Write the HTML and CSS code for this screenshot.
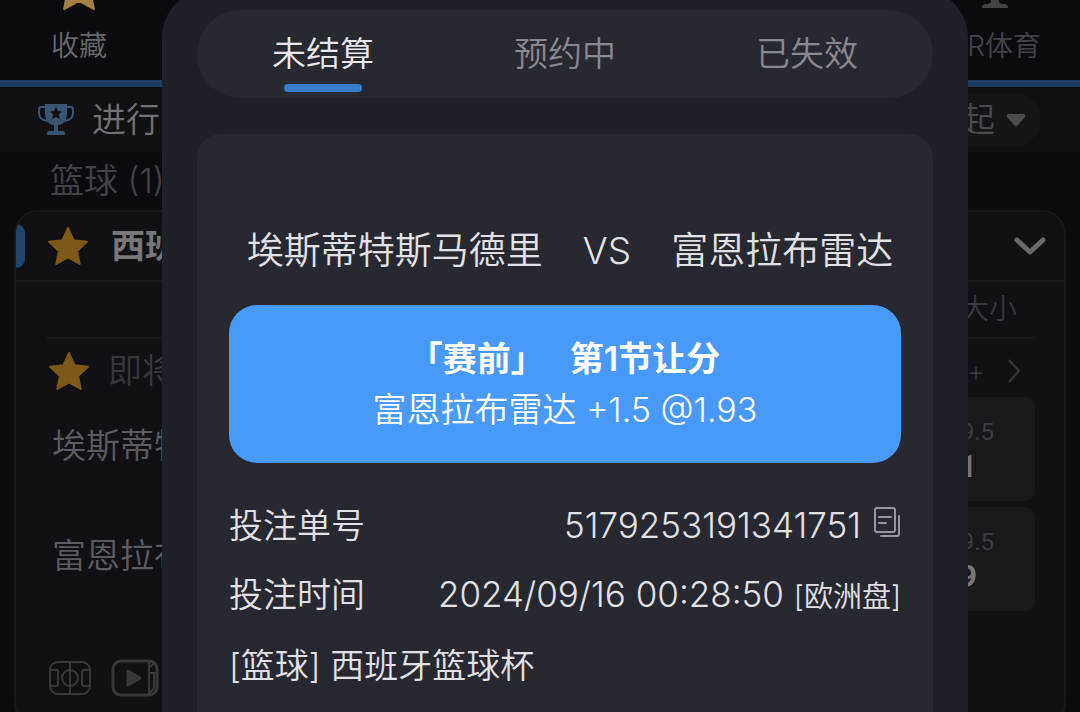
FILE: index.html
```html
<!DOCTYPE html>
<html lang="zh-CN">
<head>
    <meta charset="UTF-8">
    <meta name="viewport" content="width=device-width, initial-scale=1.0">
    <title>未结算</title>
    <link rel="stylesheet" href="styles.css">
</head>
<body>
    <svg class="sprite" aria-hidden="true">
        <symbol id="star" viewBox="0 0 42 40">
            <path d="M21 2l5.500 12.200 13.500 1.500-10 9.200 2.700 13.100L21 31.500 9.300 38 12 24.900 2 15.700l13.500-1.500z" fill="currentColor" stroke="currentColor" stroke-width="2" stroke-linejoin="round"/>
        </symbol>
    </svg>

    <!-- 背景页面 -->
    <main class="page">
        <nav class="top-nav">
            <a href="#" class="nav-item active">
                <svg class="nav-icon gold" viewBox="7 31 28 8"><use href="#star" width="42" height="40"/></svg>
                <span>收藏</span>
            </a>
            <a href="#" class="nav-item">
                <svg class="nav-icon" viewBox="0 0 36 10"><path d="M14 0h8v2q1 2 5 2 4 0 4 4H5q0-4 4-4 4 0 5-2z" fill="currentColor"/></svg>
                <span>VR体育</span>
            </a>
        </nav>

        <div class="filter-bar">
            <div class="filter-title">
                <svg class="trophy" viewBox="0 0 38 34">
                    <path d="M9 4H4q-2 0-2 3v3q0 7 9 8M29 4h5q2 0 2 3v3q0 7-9 8" fill="none" stroke="#385673" stroke-width="2"/>
                    <path d="M8 1h22v10q0 9-8 11h-1v6h5q2 0 2 4H10q0-4 2-4h5v-6h-1q-8-2-8-11z" fill="#385673"/>
                    <path d="M19 4l2 4 4 .5-3 3 .8 4.500-3.800-2-3.800 2 .8-4.500-3-3 4-.5z" fill="#111115"/>
                </svg>
                <span>进行</span>
            </div>
            <button class="league-btn">起
                <svg width="20" height="14" viewBox="0 0 20 14"><path d="M2 1h16q2 1 1 3l-7 8q-2 2-4 0L1 4Q0 2 2 1z" fill="currentColor"/></svg>
            </button>
        </div>

        <div class="sport-title">篮球 (1)</div>

        <section class="match-card">
            <header class="match-header">
                <svg class="star"><use href="#star"/></svg>
                <h2>西班</h2>
                <svg class="chevron" viewBox="0 0 32 20"><path d="M3 4l13 12L29 4" fill="none" stroke="currentColor" stroke-width="5" stroke-linecap="round" stroke-linejoin="round"/></svg>
            </header>
            <div class="match-body">
                <div class="market-row">大小</div>
                <div class="status-row">
                    <svg class="star"><use href="#star"/></svg>
                    <span>即将</span>
                    <a href="#" class="more">+
                        <svg width="14" height="24" viewBox="0 0 14 24"><path d="M2 1l10 11L2 23" fill="none" stroke="currentColor" stroke-width="2"/></svg>
                    </a>
                </div>
                <div class="team-row">
                    <span>埃斯蒂特</span>
                    <button class="odds"><small>9.5</small><b>1</b></button>
                </div>
                <div class="team-row">
                    <span>富恩拉布</span>
                    <button class="odds"><small>9.5</small><b>9</b></button>
                </div>
                <div class="match-tools">
                    <svg width="42" height="34" viewBox="0 0 42 34" fill="none" stroke="currentColor" stroke-width="2">
                        <rect x="1" y="1" width="40" height="32" rx="8"/>
                        <path d="M21 1v32M1 9h6q2 0 2 2v12q0 2-2 2H1M41 9h-6q-2 0-2 2v12q0 2 2 2h6"/>
                        <circle cx="21" cy="17" r="8"/>
                    </svg>
                    <svg width="48" height="38" viewBox="0 0 48 38" fill="none" stroke="currentColor" stroke-width="2">
                        <rect x="2" y="2" width="44" height="34" rx="8" stroke-width="3"/>
                        <path d="M38 2v34M38 9l5-5M38 14h8M43 15v14l-4 5"/>
                        <path d="M17 12l12 7-12 7z" fill="currentColor" stroke-width="3" stroke-linejoin="round"/>
                    </svg>
                </div>
            </div>
        </section>
    </main>

    <!-- 注单弹窗 -->
    <div class="modal">
        <div class="tabs">
            <button class="tab active">未结算</button>
            <button class="tab">预约中</button>
            <button class="tab">已失效</button>
        </div>

        <div class="bet-card">
            <div class="teams">
                <span>埃斯蒂特斯马德里</span>
                <span>VS</span>
                <span>富恩拉布雷达</span>
            </div>
            <div class="bet-pick">
                <strong><span>「赛前」</span><span>第1节让分</span></strong>
                <p>富恩拉布雷达 +1.5 @1.93</p>
            </div>
            <dl class="bet-info">
                <div class="info-row">
                    <dt>投注单号</dt>
                    <dd class="bet-no">5179253191341751
                        <button class="copy-btn" aria-label="复制">
                            <svg width="27" height="30" viewBox="0 0 27 30" fill="none" stroke="currentColor" stroke-width="2" stroke-linecap="round">
                                <rect x="1" y="1" width="20" height="24" rx="2"/>
                                <path d="M5 10h12M5 16h7M25 9v18q0 2-2 2H7"/>
                            </svg>
                        </button>
                    </dd>
                </div>
                <div class="info-row">
                    <dt>投注时间</dt>
                    <dd>2024/09/16 00:28:50 <small>[欧洲盘]</small></dd>
                </div>
            </dl>
            <p class="league">[篮球] 西班牙篮球杯</p>
        </div>
    </div>
</body>
</html>
```
FILE: styles.css
```css
* {
    box-sizing: border-box;
}
body {
    margin: 0;
    height: 100vh;
    overflow: hidden;
    background-color: #0c0c10;
    color: #5c5c60;
    font-family: Inter, 'Noto Sans CJK SC', sans-serif;
    font-size: 34px;
    font-weight: 350;
    line-height: 50px;
}
button {
    border: none;
    padding: 0;
    background: none;
    color: inherit;
    font: inherit;
    cursor: pointer;
}
a {
    color: inherit;
    text-decoration: none;
}
h2, p, dl, dd {
    margin: 0;
}
svg {
    display: block;
    flex: none;
}
.sprite {
    position: absolute;
    width: 0;
    height: 0;
}

/* 顶部导航 */
.top-nav {
    display: flex;
    justify-content: space-between;
    height: 87px;
    padding: 0 39px 0 51px;
    border-bottom: 7px solid #1d3d61;
    font-size: 28px;
}
.nav-item {
    display: flex;
    flex-direction: column;
    align-items: center;
    gap: 11px;
    color: #434347;
}
.nav-item.active {
    color: #69696d;
}
.nav-icon {
    width: 36px;
    height: 10px;
}
.gold {
    color: #a28042;
}

.filter-bar {
    display: flex;
    justify-content: space-between;
    align-items: center;
    height: 65px;
    padding: 0 39px 0 37px;
    background-color: #111114;
}
.filter-title {
    display: flex;
    align-items: center;
    gap: 17px;
    color: #727276;
}
.trophy {
    width: 38px;
    height: 34px;
}
.league-btn {
    display: flex;
    align-items: center;
    gap: 11px;
    height: 52px;
    padding: 0 15px 0 24px;
    border-radius: 26px;
    background-color: #151518;
    color: #4b4b4e;
}
.sport-title {
    padding: 4px 50px;
    color: #434347;
}

/* 比赛卡片 */
.match-card {
    margin: 0 14px;
    border: 2px solid #18181b;
    border-radius: 24px;
    background-color: #111115;
    overflow: hidden;
}
.match-header {
    display: flex;
    align-items: center;
    height: 70px;
    padding-right: 18px;
    border-bottom: 2px solid #18181b;
}
.match-header::before {
    content: '';
    width: 9px;
    height: 44px;
    margin-right: 22px;
    border-radius: 0 9px 9px 0;
    background-color: #1e476d;
}
.match-header h2 {
    flex: 1;
    margin-left: 22px;
    color: #77777a;
    font-size: 34px;
    font-weight: 700;
}
.star {
    width: 42px;
    height: 40px;
    color: #7c5918;
}
.chevron {
    width: 32px;
    height: 20px;
    color: #6a6a6d;
}
.match-body {
    padding: 0 29px 28px 30px;
}
.market-row {
    height: 57px;
    padding-right: 18px;
    border-bottom: 2px solid #18181b;
    color: #38383c;
    font-size: 28px;
    line-height: 54px;
    text-align: right;
}
.status-row {
    display: flex;
    align-items: center;
    gap: 18px;
    height: 58px;
    padding: 6px 14px 0 2px;
    color: #38383c;
}
.more {
    display: flex;
    align-items: center;
    gap: 22px;
    margin-left: auto;
    font-size: 28px;
}
.team-row {
    display: flex;
    justify-content: space-between;
    margin-bottom: 6px;
    padding-left: 6px;
    line-height: 98px;
}
.odds {
    display: flex;
    flex-direction: column;
    align-items: flex-end;
    justify-content: center;
    width: 160px;
    height: 104px;
    padding-right: 41px;
    border-radius: 10px;
    background-color: #19191d;
    font-family: Roboto, sans-serif;
    font-size: 24px;
    line-height: 34px;
}
.odds small {
    color: #3c3c40;
    font-size: 24px;
    font-weight: 400;
}
.odds b {
    margin-right: 17px;
    color: #77777a;
    font-size: 32px;
}
.match-tools {
    display: flex;
    align-items: center;
    gap: 20px;
    padding: 42px 3px 0;
    color: #38383b;
}

/* 弹窗 */
.modal {
    position: fixed;
    top: -12px;
    right: 112px;
    bottom: 0;
    left: 162px;
    padding: 22px 35px 0;
    border-radius: 50px 50px 0 0;
    background-color: #1e2128;
    color: #e2e2e6;
    overflow: hidden;
}
.tabs {
    display: flex;
    height: 88px;
    padding: 0 5px;
    border-radius: 44px;
    background-color: #282831;
}
.tab {
    position: relative;
    flex: 1;
    color: #89898f;
}
.tab.active {
    color: #e8e8ec;
}
.tab.active::after {
    content: '';
    position: absolute;
    bottom: 6px;
    left: 50%;
    width: 78px;
    height: 8px;
    margin-left: -39px;
    border-radius: 4px;
    background-color: #3b7dca;
}
.bet-card {
    height: 100%;
    margin-top: 36px;
    padding: 92px 32px 0;
    border-radius: 24px;
    background-color: #282831;
}
.teams {
    display: flex;
    justify-content: center;
    gap: 40px;
    margin-bottom: 29px;
    padding-left: 10px;
    font-size: 37px;
    white-space: nowrap;
}
.bet-pick {
    padding: 28px 0;
    border-radius: 28px;
    background-color: #4899f8;
    color: #fff;
    line-height: 51px;
    text-align: center;
}
.bet-pick strong {
    display: flex;
    justify-content: center;
    gap: 42px;
    padding-left: 16px;
    font-weight: 600;
    font-feature-settings: 'halt';
}
.bet-info {
    margin-top: 28px;
}
.info-row {
    display: flex;
    justify-content: space-between;
    line-height: 69px;
}
.info-row dd {
    font-size: 35px;
}
.info-row small {
    font-size: 29px;
}
.bet-no {
    display: flex;
    align-items: center;
    gap: 13px;
}
.copy-btn {
    margin-top: -8px;
    color: #96969d;
}
.league {
    line-height: 69px;
}
```
